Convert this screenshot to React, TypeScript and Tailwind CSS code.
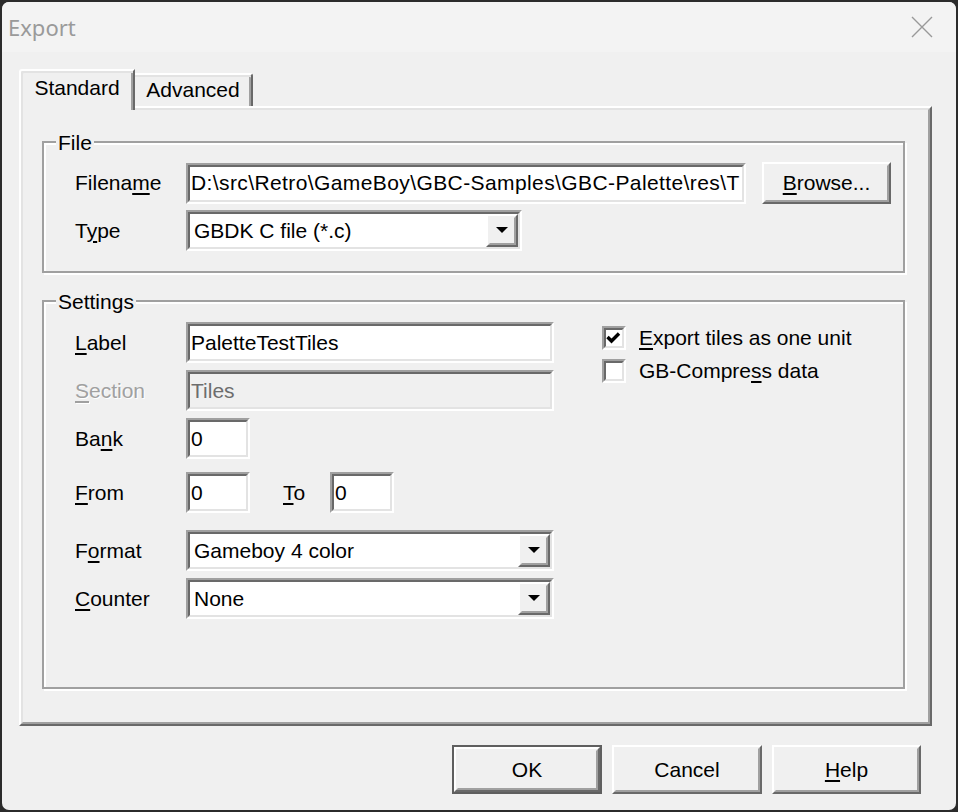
import React from "react";

const font = "font-['Liberation_Sans',Arial,sans-serif] text-[21px] leading-[24px] text-black";

function Key({ children }: { children: React.ReactNode }) {
  return <span className="underline decoration-2 underline-offset-[3px]">{children}</span>;
}

function Sunken({ className = "", bg = "bg-white", children }: { className?: string; bg?: string; children?: React.ReactNode }) {
  return (
    <div className={`border-2 border-t-[#a0a0a0] border-l-[#a0a0a0] border-b-white border-r-white ${className}`}>
      <div className={`flex h-full items-center overflow-hidden whitespace-nowrap border-2 border-t-[#696969] border-l-[#696969] border-b-[#e3e3e3] border-r-[#e3e3e3] ${bg}`}>
        {children}
      </div>
    </div>
  );
}

function Raised({ className = "", children }: { className?: string; children?: React.ReactNode }) {
  return (
    <div className={`border-2 border-t-white border-l-white border-b-[#696969] border-r-[#696969] ${className}`}>
      <div className="flex h-full items-center justify-center border-2 border-t-[#f0f0f0] border-l-[#f0f0f0] border-b-[#a0a0a0] border-r-[#a0a0a0] bg-[#f0f0f0]">
        {children}
      </div>
    </div>
  );
}

function Combo({ width, value }: { width: string; value: string }) {
  return (
    <Sunken className={`${width} h-[41px]`}>
      <span className="flex-1 pl-[4px]">{value}</span>
      <Raised className="h-full w-[32px]">
        <svg width="12" height="7" viewBox="0 0 12 7">
          <polygon points="0,0 12,0 6,6" fill="#000" />
        </svg>
      </Raised>
    </Sunken>
  );
}

function Row({ label, className = "", children }: { label: React.ReactNode; className?: string; children: React.ReactNode }) {
  return (
    <div className={`flex items-center ${className}`}>
      <div className="w-[111px]">{label}</div>
      {children}
    </div>
  );
}

function Group({ title, className = "", children }: { title: string; className?: string; children: React.ReactNode }) {
  return (
    <div className={`relative border-2 border-[#a0a0a0] shadow-[inset_2px_2px_0_#ffffff,2px_2px_0_#ffffff] ${className}`}>
      <span className="absolute -top-[12px] left-[12px] bg-[#f0f0f0] px-[2px]">{title}</span>
      {children}
    </div>
  );
}

function Checkbox({ checked, children, className = "" }: { checked?: boolean; children: React.ReactNode; className?: string }) {
  return (
    <div className={`flex items-center ${className}`}>
      <Sunken className="h-[24px] w-[24px]">
        {checked && (
          <svg width="16" height="16" viewBox="0 0 16 16">
            <polyline points="1.5,7 5.5,11 13,3.5" fill="none" stroke="#000" strokeWidth="3.4" />
          </svg>
        )}
      </Sunken>
      <span className="ml-[13px]">{children}</span>
    </div>
  );
}

export default function App() {
  return (
    <div className={`h-[812px] w-[958px] bg-[#2b2b2b] p-[2px] ${font}`}>
      <div className="flex h-full flex-col overflow-hidden rounded-[7px] bg-[#f0f0f0]">
        {/* title bar */}
        <div className="flex h-[50px] items-center justify-between bg-[#f3f3f3] pl-[6px] pr-[23px]">
          <span className="font-['Noto_Sans',sans-serif] text-[22px] text-[#9a9a9a]">Export</span>
          <svg width="22" height="22" viewBox="0 0 22 22">
            <path d="M1 1 L21 21 M21 1 L1 21" stroke="#999999" strokeWidth="1.4" />
          </svg>
        </div>

        <div className="flex flex-1 flex-col pl-[17px] pt-[17px]">
          {/* tabs */}
          <div className="flex h-[37px] items-end">
            <div className="relative z-10 -mb-[4px] h-[41px] w-[116px] rounded-tl-[3px] border-l-2 border-t-2 border-r-2 border-l-white border-t-white border-r-[#696969] bg-[#f0f0f0] pt-[5px] text-center shadow-[inset_2px_2px_0_#e3e3e3,inset_-2px_0_0_#a0a0a0]">
              Standard
            </div>
            <div className="h-[33px] w-[118px] rounded-tr-[3px] border-t-2 border-r-2 border-t-white border-r-[#696969] pt-[3px] text-center shadow-[inset_0_2px_0_#e3e3e3,inset_-2px_0_0_#a0a0a0]">
              Advanced
            </div>
          </div>

          {/* tab panel */}
          <div className="h-[620px] w-[913px] border-2 border-t-white border-l-white border-b-[#696969] border-r-[#696969]">
            <div className="h-full border-2 border-t-[#e3e3e3] border-l-[#e3e3e3] border-b-[#a0a0a0] border-r-[#a0a0a0] pl-[19px] pt-[31px]">
              <Group title="File" className="h-[132px] w-[863px] pl-[31px] pt-[19px]">
                <Row label={<>Filena<Key>m</Key>e</>}>
                  <Sunken className="h-[41px] w-[560px]">
                    <span className="pl-[1px] tracking-[0.4px]">D:\src\Retro\GameBoy\GBC-Samples\GBC-Palette\res\T</span>
                  </Sunken>
                  <Raised className="ml-[16px] h-[42px] w-[129px]">
                    <span>
                      <Key>B</Key>rowse...
                    </span>
                  </Raised>
                </Row>
                <Row label={<>T<Key>y</Key>pe</>} className="mt-[6px]">
                  <Combo width="w-[336px]" value="GBDK C file (*.c)" />
                </Row>
              </Group>

              <Group title="Settings" className="mt-[27px] flex h-[389px] w-[863px] pl-[31px] pt-[20px]">
                <div className="flex flex-col">
                  <Row label={<><Key>L</Key>abel</>}>
                    <Sunken className="h-[41px] w-[368px]">
                      <span className="pl-[1px]">PaletteTestTiles</span>
                    </Sunken>
                  </Row>
                  <Row
                    label={
                      <span className="text-[#a0a0a0] [text-shadow:1px_1px_0_#ffffff]">
                        <Key>S</Key>ection
                      </span>
                    }
                    className="mt-[7px]"
                  >
                    <Sunken className="h-[41px] w-[368px]" bg="bg-[#f0f0f0]">
                      <span className="pl-[1px] text-[#6d6d6d]">Tiles</span>
                    </Sunken>
                  </Row>
                  <Row label={<>Ba<Key>n</Key>k</>} className="mt-[7px]">
                    <Sunken className="h-[41px] w-[64px]">
                      <span className="pl-[1px]">0</span>
                    </Sunken>
                  </Row>
                  <Row label={<><Key>F</Key>rom</>} className="mt-[13px]">
                    <Sunken className="h-[41px] w-[64px]">
                      <span className="pl-[1px]">0</span>
                    </Sunken>
                    <span className="ml-[33px] w-[47px]">
                      <Key>T</Key>o
                    </span>
                    <Sunken className="h-[41px] w-[64px]">
                      <span className="pl-[1px]">0</span>
                    </Sunken>
                  </Row>
                  <Row label={<>F<Key>o</Key>rmat</>} className="mt-[17px]">
                    <Combo width="w-[368px]" value="Gameboy 4 color" />
                  </Row>
                  <Row label={<><Key>C</Key>ounter</>} className="mt-[7px]">
                    <Combo width="w-[368px]" value="None" />
                  </Row>
                </div>

                <div className="ml-[48px] flex flex-col pt-[4px]">
                  <Checkbox checked>
                    <Key>E</Key>xport tiles as one unit
                  </Checkbox>
                  <Checkbox className="mt-[9px]">
                    GB-Compre<Key>s</Key>s data
                  </Checkbox>
                </div>
              </Group>
            </div>
          </div>

          {/* buttons */}
          <div className="flex justify-end gap-[10px] pr-[35px] pt-[19px]">
            <div className="h-[49px] w-[150px] border-2 border-[#5f5f5f]">
              <Raised className="h-full w-full">OK</Raised>
            </div>
            <Raised className="h-[49px] w-[150px]">Cancel</Raised>
            <Raised className="h-[49px] w-[149px]">
              <span>
                <Key>H</Key>elp
              </span>
            </Raised>
          </div>
        </div>
      </div>
    </div>
  );
}
